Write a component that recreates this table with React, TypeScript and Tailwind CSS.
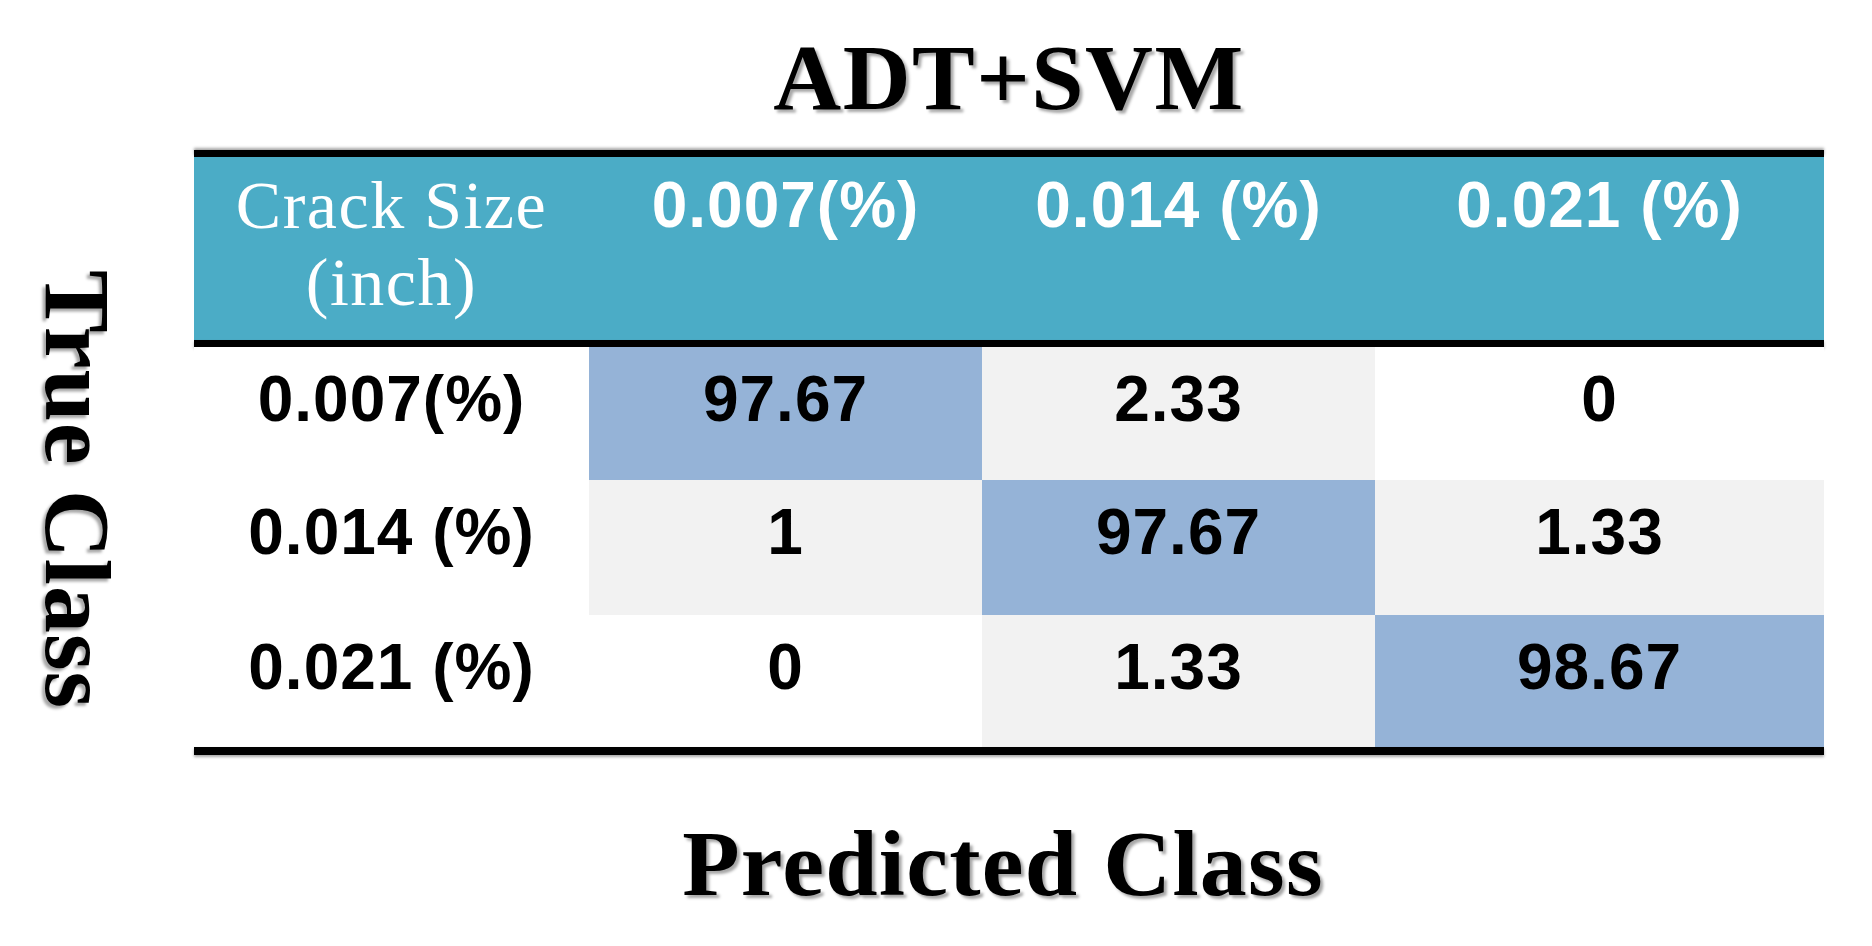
const BLUE = "bg-[#95B3D7]";
const GRAY = "bg-[#F2F2F2]";
const WHITE = "bg-white";

const heads = ["0.007(%)", "0.014 (%)", "0.021 (%)"];

const rows = [
  {
    label: "0.007(%)",
    h: "h-[133px]",
    cells: [
      { v: "97.67", bg: BLUE },
      { v: "2.33", bg: GRAY },
      { v: "0", bg: WHITE },
    ],
  },
  {
    label: "0.014 (%)",
    h: "h-[135px]",
    cells: [
      { v: "1", bg: GRAY },
      { v: "97.67", bg: BLUE },
      { v: "1.33", bg: GRAY },
    ],
  },
  {
    label: "0.021 (%)",
    h: "h-[132px]",
    cells: [
      { v: "0", bg: WHITE },
      { v: "1.33", bg: GRAY },
      { v: "98.67", bg: BLUE },
    ],
  },
];

const shadowText = "[text-shadow:3px_3px_3px_rgba(0,0,0,0.35)]";

export default function App() {
  return (
    <div className="flex h-[946px] w-[1872px] bg-white font-['Liberation_Sans',Arial,sans-serif] text-black">
      {/* y axis label */}
      <div className="w-[194px] pl-[31px] pt-[270px]">
        <div
          className={`font-['Liberation_Serif','Times_New_Roman',serif] text-[94px] font-bold leading-[94px] tracking-[1px] [writing-mode:vertical-rl] ${shadowText}`}
        >
          True Class
        </div>
      </div>

      <div className="flex w-[1630px] flex-col">
        <h1
          className={`mt-[30px] text-center font-['Liberation_Serif','Times_New_Roman',serif] text-[94px] font-bold leading-[94px] tracking-[1.5px] ${shadowText}`}
        >
          ADT+SVM
        </h1>

        <div className="mt-[26px] h-[7px] bg-black shadow-[0_-2px_3px_rgba(0,0,0,0.35)]"></div>

        <div className="grid h-[183px] grid-cols-[395px_393px_393px_449px] bg-[#4BACC6] pt-[10px] text-white">
          <div className="text-center font-['Liberation_Serif','Times_New_Roman',serif] text-[68px] leading-[77px] tracking-[1.5px]">
            Crack Size
            <br />
            (inch)
          </div>
          {heads.map((t) => (
            <div key={t} className="text-center text-[64px] font-bold leading-[77px] tracking-[1px]">
              {t}
            </div>
          ))}
        </div>

        <div className="h-[7px] bg-black shadow-[0_2px_3px_rgba(0,0,0,0.3)]"></div>

        {rows.map((r) => (
          <div key={r.label} className={`grid grid-cols-[395px_393px_393px_449px] ${r.h}`}>
            <div className="bg-white pt-[14px] text-center text-[64px] font-bold leading-[77px] tracking-[1px]">
              {r.label}
            </div>
            {r.cells.map((c, i) => (
              <div key={i} className={`${c.bg} pt-[14px] text-center text-[64px] font-bold leading-[77px] tracking-[1px]`}>
                {c.v}
              </div>
            ))}
          </div>
        ))}

        <div className="h-[8px] bg-black shadow-[0_2px_3px_rgba(0,0,0,0.35)]"></div>

        <div
          className={`mt-[61px] pr-[12px] text-center font-['Liberation_Serif','Times_New_Roman',serif] text-[94px] font-bold leading-[94px] tracking-[1.3px] ${shadowText}`}
        >
          Predicted Class
        </div>
      </div>
    </div>
  );
}
